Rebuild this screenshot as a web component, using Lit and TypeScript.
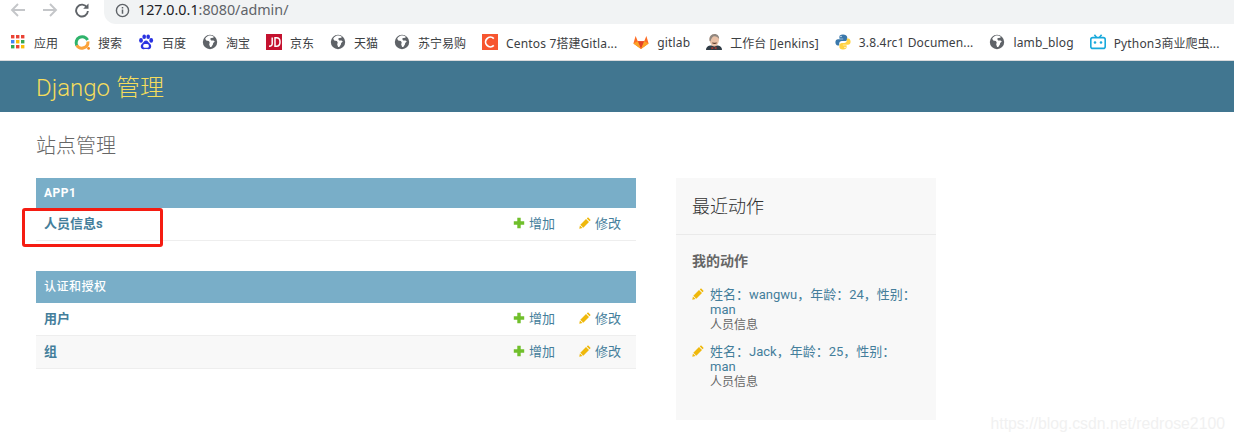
import { LitElement, html, css, svg } from "lit";
import { customElement } from "lit/decorators.js";

const globe = html`<svg viewBox="0 0 16 16" width="16" height="16"><circle cx="8" cy="8" r="7.2" fill="#5f6368"/><path d="M7 1.600C5.500 2.200 4.200 3.200 3.200 4.800l1 1.600 2.700.6.800 1.500-.5 2 .9 2.400 1.200.1 1.600-2.400.3-1.600 1.600-1.400-1.300-1-2.400-.2-1-1.600L9.300 4l2-.2.5-1C10.600 2 9 1.400 7 1.600Z" fill="#fff"/></svg>`;

const apps = html`<svg viewBox="0 0 14 14" width="14" height="14" class="apps">
  ${[["#ea4335", "#ea4335", "#ea4335"], ["#4285f4", "#fbbc05", "#34a853"], ["#34a853", "#ea4335", "#fbbc05"]].map((row, y) =>
    row.map((c, x) => svg`<rect x=${x * 5} y=${y * 5} width="3.400" height="3.400" fill=${c}/>`))}
</svg>`;

const ring = html`<svg viewBox="0 0 16 16" width="16" height="16"><path d="M2.800 11.600A6 6 0 1 1 13.600 6" fill="none" stroke="#2fb36b" stroke-width="3"/><path d="M13.900 7.500A6 6 0 0 1 2.800 11.200" fill="none" stroke="#fba33a" stroke-width="3"/><circle cx="14.600" cy="14.400" r="1.400" fill="#f58a1f"/></svg>`;

const baidu = html`<svg viewBox="0 0 16 16" width="16" height="16" fill="#2932e1"><ellipse cx="3" cy="6.400" rx="1.900" ry="2.300"/><ellipse cx="6.200" cy="2.800" rx="1.800" ry="2.300"/><ellipse cx="10.200" cy="2.800" rx="1.800" ry="2.300"/><ellipse cx="13.200" cy="6.400" rx="1.900" ry="2.300"/><path d="M8 6.600c-2 0-2.400 2-4 3.200C2.600 11 2.400 13 3.400 14.200c1.200 1.400 3 .8 4.600.8s3.400.6 4.600-.8c1-1.200.8-3.200-.6-4.400C10.400 8.600 10 6.600 8 6.600Z"/><rect x="5.200" y="10" width="5.600" height="3.800" rx="1.500" fill="#fff"/></svg>`;

const jd = html`<svg viewBox="0 0 16 16" width="16" height="16"><rect width="16" height="16" fill="#c4122f"/><path d="M6.200 3.500v6.300c0 1.700-1.300 2.500-3.200 2.300M9 3.800h1.500c2.400 0 3.500 1.700 3.500 4.200s-1.100 4.200-3.500 4.200H9Z" fill="none" stroke="#fff" stroke-width="1.500"/></svg>`;

const cicon = html`<svg viewBox="0 0 16 16" width="16" height="16"><rect width="16" height="16" fill="#f7552f"/><path d="M11.800 4.600A4.800 4.800 0 1 0 11.800 11.400" fill="none" stroke="#fff" stroke-width="1.800"/></svg>`;

const fox = html`<svg viewBox="0 0 16 16" width="16" height="16"><path d="M8 15 .4 9.400 2.600 2l2.200 5.200h6.400L13.400 2l2.200 7.400Z" fill="#fc6d26"/><path d="M8 15 4.800 7.200h6.400Z" fill="#e24329"/><path d="M8 15 .4 9.400l4.400-2.200ZM8 15l7.600-5.600-4.400-2.200Z" fill="#fca326"/></svg>`;

const jenkins = html`<svg viewBox="0 0 16 16" width="16" height="16"><path d="M0 16c0-2.600 1.500-3.800 4-4.400h8c2.500.6 4 1.800 4 4.400Z" fill="#2f3b45"/><path d="M3.500 4.500C3.500 2 5.800.2 8.500.3c3 .1 4.700 2.200 4.500 5.200-.2 3-1.600 6.800-4.500 7C6 12.700 4 9 3.700 7Z" fill="#e8c0a6"/><path d="M3.600 7C2.800 3 5.200.1 8.500.1c3 0 4.900 2.200 4.600 4.800-1-1.500-2.500-2.700-4.600-2.700C6.500 2.200 5.200 4.200 4.600 7.300Z" fill="#8f8780"/><path d="M6.400 8.700c1.300.8 3 .8 4.200 0" fill="none" stroke="#5b3b2e" stroke-width="1.100"/><path d="M5.500 12.800 8 14l2.500-1.200v2.600L8 14l-2.500 1.400Z" fill="#b33a2f"/></svg>`;

const python = html`<svg viewBox="0 0 16 16" width="16" height="16"><path d="M8 .5c-3 0-3.600 1.200-3.600 2.500v1.700H8.200v.6H3C1.500 5.300.4 6.400.4 8.300s1 3.200 2.400 3.200h1.400V9.600c0-1.400 1.200-2.500 2.600-2.500h3.400c1.200 0 2-1 2-2.100V3C11.800 1.500 10.500.5 8 .5Z" fill="#3a78ab"/><path d="M8 15.500c3 0 3.600-1.200 3.600-2.500v-1.700H7.800v-.6H13c1.500 0 2.600-1.100 2.600-3S14.600 4.500 13.200 4.500h-1.400v1.900c0 1.400-1.200 2.500-2.600 2.500H6.800c-1.200 0-2.400 1-2.400 2.100V13c0 1.500 1.100 2.500 3.600 2.500Z" fill="#ffd343"/><circle cx="6" cy="2.500" r=".7" fill="#fff"/><circle cx="10" cy="13.500" r=".7" fill="#fff"/></svg>`;

const bili = html`<svg viewBox="0 0 16 16" width="16" height="16"><rect x=".8" y="3.600" width="14.400" height="10.800" rx="2" fill="none" stroke="#18a9dc" stroke-width="1.600"/><path d="M4.400 .8 6.600 3.400M11.600 .8 9.400 3.400" stroke="#18a9dc" stroke-width="1.600"/><circle cx="5" cy="8.500" r="1.300" fill="#18a9dc"/><circle cx="11" cy="8.500" r="1.300" fill="#18a9dc"/></svg>`;

const plus = html`<svg class="ic" viewBox="0 0 12 12" width="12" height="12"><path d="M4.300 .8h3.400v3.500h3.500v3.400H7.700v3.500H4.300V7.700H.8V4.300h3.500Z" fill="#70bf2b"/></svg>`;
const pencil = html`<svg class="ic" viewBox="0 0 12 12" width="12" height="12"><path d="M9 .3 11.700 3 10.500 4.200 7.800 1.500ZM7 2 10 5 4.300 10.700 1.300 7.700ZM.9 8.400 3.600 11.100.3 11.700Z" fill="#efb80b"/></svg>`;

const bookmarks = [
  { icon: apps, text: "应用" },
  { icon: ring, text: "搜索" },
  { icon: baidu, text: "百度" },
  { icon: globe, text: "淘宝" },
  { icon: jd, text: "京东" },
  { icon: globe, text: "天猫" },
  { icon: globe, text: "苏宁易购" },
  { icon: cicon, text: "Centos 7搭建Gitla..." },
  { icon: fox, text: "gitlab" },
  { icon: jenkins, text: "工作台 [Jenkins]" },
  { icon: python, text: "3.8.4rc1 Documen..." },
  { icon: globe, text: "lamb_blog" },
  { icon: bili, text: "Python3商业爬虫..." },
];

const modules = [
  { caption: "APP1", rows: ["人员信息s"] },
  { caption: "认证和授权", rows: ["用户", "组"] },
];

const actions = ["姓名：wangwu，年龄：24，性别：man", "姓名：Jack，年龄：25，性别：man"];

/* Latin runs in the bookmark bar are spaced a little wider than CJK runs. */
const runs = (t: string) =>
  t.split(/([\u4e00-\u9fff]+)/).map((p, i) => (i % 2 ? p : html`<span class="lat">${p}</span>`));

@customElement("app-root")
export class AppRoot extends LitElement {
  static styles = css`
    :host {
      display: block;
      position: relative;
      width: 1234px;
      height: 442px;
      overflow: hidden;
      background: #fff;
      font-family: Roboto, "Noto Sans CJK SC", sans-serif;
      font-size: 13px;
      color: #333;
    }
    a { color: #447e9b; text-decoration: none; }
    .toolbar { display: flex; align-items: center; height: 24px; padding-left: 10px; }
    .nav { display: flex; width: 94px; gap: 16px; align-items: center; margin-top: -4px; }
    .nav svg { display: block; }
    .omni {
      flex: 1;
      display: flex;
      align-items: center;
      gap: 8px;
      height: 20px;
      padding: 0 0 4px 11px;
      margin-right: -20px;
      background: #f1f3f4;
      border-radius: 0 0 0 12px;
      font: 14.300px/20px "Noto Sans", "Noto Sans CJK SC", sans-serif;
      color: #5f6368;
    }
    .omni svg { display: block; }
    .omni b { font-weight: 400; color: #202124; }
    .bookmarks {
      display: flex;
      align-items: center;
      gap: 16px;
      height: 36px;
      padding-left: 10px;
      border-bottom: 1px solid #d9dadc;
      font: 12px "Noto Sans", "Noto Sans CJK SC", sans-serif;
      color: #3c4043;
      white-space: nowrap;
    }
    .bm { display: flex; align-items: center; gap: 8px; }
    .bm svg { display: block; flex: none; }
    .bm svg.apps { margin: 0 1px; }
    .bm > span { padding-top: 1px; }
    .lat { letter-spacing: .15px; }
    .header {
      height: 48px;
      display: flex;
      align-items: center;
      padding: 0 0 3px 36px;
      background: #417690;
      color: #f5dd5d;
      font-size: 24px;
      font-weight: 300;
    }
    h1 {
      margin: 0;
      padding: 21px 0 0 36px;
      font-size: 20px;
      line-height: 26px;
      font-weight: 300;
      color: #666;
    }
    .content { display: flex; gap: 40px; padding: 19px 0 0 36px; align-items: flex-start; }
    .left { width: 600px; display: flex; flex-direction: column; gap: 30px; }
    .caption {
      padding: 0 8px;
      line-height: 30px;
      background: #79aec8;
      color: #fff;
      font-size: 12px;
      font-weight: 700;
      letter-spacing: .5px;
    }
    .caption.cjk { line-height: 32px; font-weight: 500; }
    .row {
      display: flex;
      align-items: center;
      height: 29px;
      padding: 0 15px 3px 8px;
      border-bottom: 1px solid #eee;
    }
    .row.alt { background: #f8f8f8; }
    .row .name { flex: 1; font-weight: 700; }
    .row .act { display: flex; align-items: center; gap: 4px; }
    .row .act + .act { margin-left: 24px; }
    .ic { display: block; flex: none; }
    .side { width: 260px; height: 242px; box-sizing: border-box; background: #f8f8f8; }
    h2 {
      margin: 0;
      height: 57px;
      box-sizing: border-box;
      padding: 1px 16px 0;
      border-bottom: 1px solid #eaeaea;
      font-size: 18px;
      line-height: 56px;
      font-weight: 300;
      color: #333;
    }
    h3 {
      margin: 0;
      padding: 16px 16px 0;
      font-size: 14px;
      line-height: 20px;
      font-weight: 700;
      color: #666;
    }
    ul { list-style: none; margin: 0; padding: 16px 20px 0 16px; display: flex; flex-direction: column; gap: 12px; }
    li { display: flex; gap: 6px; line-height: 15px; }
    li .ic { margin-top: 1px; }
    li span { display: block; padding-top: 1px; margin-bottom: -1px; color: #666; font-size: 12px; }
    .mark {
      position: absolute;
      left: 22px;
      top: 208px;
      width: 141px;
      height: 39px;
      box-sizing: border-box;
      border: 3px solid #f51c12;
      border-radius: 3px;
    }
    .water {
      position: absolute;
      right: 9px;
      top: 414px;
      font: 15.800px/20px "Liberation Sans", sans-serif;
      color: #f1f1f1;
    }
  `;

  render() {
    return html`
      <div class="toolbar">
        <div class="nav">
          <svg viewBox="0 0 16 16" width="16" height="16"><path d="M15 8H2M8 2 2 8 8 14" fill="none" stroke="#c4c6c9" stroke-width="1.900"/></svg>
          <svg viewBox="0 0 16 16" width="16" height="16"><path d="M1 8h13M8 2 14 8 8 14" fill="none" stroke="#c4c6c9" stroke-width="1.900"/></svg>
          <svg viewBox="0 0 16 16" width="16" height="16"><path d="M13 5.400A5.900 5.900 0 1 0 13.900 9" fill="none" stroke="#5f6368" stroke-width="1.900"/><path d="M14.500 1.500v5.300H9.200Z" fill="#5f6368"/></svg>
        </div>
        <div class="omni">
          <svg viewBox="0 0 16 16" width="15" height="15"><circle cx="8" cy="8" r="6.500" fill="none" stroke="#5f6368" stroke-width="1.500"/><path d="M8 7v4.500M8 4.300v1.500" stroke="#5f6368" stroke-width="1.600"/></svg>
          <span><b>127.0.0.1</b>:8080/admin/</span>
        </div>
      </div>
      <div class="bookmarks">
        ${bookmarks.map((b) => html`<div class="bm">${b.icon}<span>${runs(b.text)}</span></div>`)}
      </div>
      <div class="header">Django 管理</div>
      <h1>站点管理</h1>
      <div class="content">
        <div class="left">
          ${modules.map((m) => html`
            <section>
              <div class="caption ${m.caption === "APP1" ? "" : "cjk"}">${m.caption}</div>
              ${m.rows.map((r, i) => html`
                <div class="row ${i % 2 ? "alt" : ""}">
                  <a class="name">${r}</a>
                  <a class="act">${plus}增加</a>
                  <a class="act">${pencil}修改</a>
                </div>`)}
            </section>`)}
        </div>
        <aside class="side">
          <h2>最近动作</h2>
          <h3>我的动作</h3>
          <ul>
            ${actions.map((a) => html`
              <li>${pencil}<div><a>${a}</a><span>人员信息</span></div></li>`)}
          </ul>
        </aside>
      </div>
      <div class="mark"></div>
      <div class="water">https://blog.csdn.net/redrose2100</div>
    `;
  }
}
